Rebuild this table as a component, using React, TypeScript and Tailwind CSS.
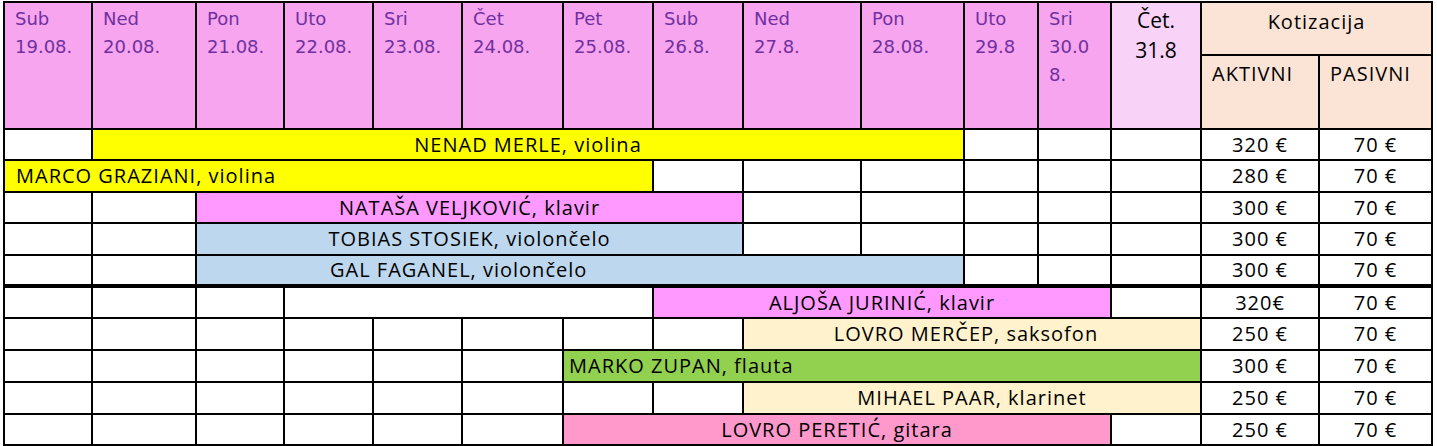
import React from 'react'

type Cell = { span?: string; bg?: string; text?: string; align?: string }
type Row = { cells: Cell[]; fees: [string, string]; thick?: boolean }

const days: string[][] = [
  ['Sub', '19.08.'],
  ['Ned', '20.08.'],
  ['Pon', '21.08.'],
  ['Uto', '22.08.'],
  ['Sri', '23.08.'],
  ['Čet', '24.08.'],
  ['Pet', '25.08.'],
  ['Sub', '26.8.'],
  ['Ned', '27.8.'],
  ['Pon', '28.08.'],
  ['Uto', '29.8'],
  ['Sri', '30.0', '8.'],
]

const blank = (n: number): Cell[] => Array.from({ length: n }, () => ({}))

const rows: Row[] = [
  {
    cells: [...blank(1), { span: 'col-span-9', bg: 'bg-[#ffff00]', text: 'NENAD MERLE, violina', align: 'justify-center' }, ...blank(3)],
    fees: ['320 €', '70 €'],
  },
  {
    cells: [{ span: 'col-span-7', bg: 'bg-[#ffff00]', text: 'MARCO GRAZIANI, violina', align: 'justify-start pl-[11px]' }, ...blank(6)],
    fees: ['280 €', '70 €'],
  },
  {
    cells: [...blank(2), { span: 'col-span-6', bg: 'bg-[#ff99ff]', text: 'NATAŠA VELJKOVIĆ, klavir', align: 'justify-center' }, ...blank(5)],
    fees: ['300 €', '70 €'],
  },
  {
    cells: [...blank(2), { span: 'col-span-6', bg: 'bg-[#bdd7ee]', text: 'TOBIAS STOSIEK, violončelo', align: 'justify-center' }, ...blank(5)],
    fees: ['300 €', '70 €'],
  },
  {
    cells: [...blank(2), { span: 'col-span-8', bg: 'bg-[#bdd7ee]', text: 'GAL FAGANEL, violončelo', align: 'justify-start pl-[133px]' }, ...blank(3)],
    fees: ['300 €', '70 €'],
  },
  {
    cells: [...blank(3), { span: 'col-span-4' }, { span: 'col-span-5', bg: 'bg-[#ff99ff]', text: 'ALJOŠA JURINIĆ, klavir', align: 'justify-center' }, ...blank(1)],
    fees: ['320€', '70 €'],
    thick: true,
  },
  {
    cells: [...blank(8), { span: 'col-span-5', bg: 'bg-[#fff2cc]', text: 'LOVRO MERČEP, saksofon', align: 'justify-center pr-[12px]' }],
    fees: ['250 €', '70 €'],
  },
  {
    cells: [...blank(6), { span: 'col-span-7', bg: 'bg-[#92d050]', text: 'MARKO ZUPAN, flauta', align: 'justify-start pl-[5px]' }],
    fees: ['300 €', '70 €'],
  },
  {
    cells: [...blank(8), { span: 'col-span-5', bg: 'bg-[#fff2cc]', text: 'MIHAEL PAAR, klarinet', align: 'justify-center' }],
    fees: ['250 €', '70 €'],
  },
  {
    cells: [...blank(6), { span: 'col-span-6', bg: 'bg-[#ff99cc]', text: 'LOVRO PERETIĆ, gitara', align: 'justify-center' }, ...blank(1)],
    fees: ['250 €', '70 €'],
  },
]

const bodyText = "font-['Open_Sans',sans-serif] text-[20px] tracking-[1px] text-black whitespace-nowrap"

export default function App() {
  return (
    <div className="min-h-screen bg-white">
      <div className="ml-[3px] mt-[1px] grid w-[1430px] grid-cols-[86px_102px_86px_87px_87px_99px_88px_88px_116px_101px_72px_71px_88px_116px_111px] grid-rows-[51px_72px_29px_30px_29px_30px_28px_31px_30px_30px_30px_29px] gap-[2px] bg-black p-[2px]">
        {days.map((lines, i) => (
          <div key={i} className="row-span-2 flex flex-col bg-[#f7a5ee] pl-[10px] pt-[2px] font-['DejaVu_Sans',sans-serif] text-[18px] leading-[28px] text-[#7030a0]">
            {lines.map((l, j) => (
              <span key={j}>{l}</span>
            ))}
          </div>
        ))}
        <div className="row-span-2 flex flex-col items-center bg-[#f9d2f7] pt-[2px] font-['Open_Sans',sans-serif] text-[21px] leading-[30px] text-black">
          <span>Čet.</span>
          <span>31.8</span>
        </div>
        <div className={`col-span-2 flex justify-center bg-[#fbe4d5] pt-[4px] ${bodyText}`}>Kotizacija</div>
        <div className={`bg-[#fbe4d5] pl-[10px] pt-[3px] ${bodyText}`}>AKTIVNI</div>
        <div className={`bg-[#fbe4d5] pl-[10px] pt-[3px] ${bodyText}`}>PASIVNI</div>

        {rows.map((row, r) => {
          const edge = row.thick ? 'border-t-2 border-black' : ''
          return (
            <React.Fragment key={r}>
              {row.cells.map((c, i) => (
                <div key={i} className={`flex items-center ${c.span ?? ''} ${c.bg ?? 'bg-white'} ${c.align ?? ''} ${edge} ${bodyText}`}>
                  {c.text}
                </div>
              ))}
              <div className={`flex items-center justify-center bg-white ${edge} ${bodyText}`}>{row.fees[0]}</div>
              <div className={`flex items-center justify-center bg-white ${edge} ${bodyText}`}>{row.fees[1]}</div>
            </React.Fragment>
          )
        })}
      </div>
    </div>
  )
}
